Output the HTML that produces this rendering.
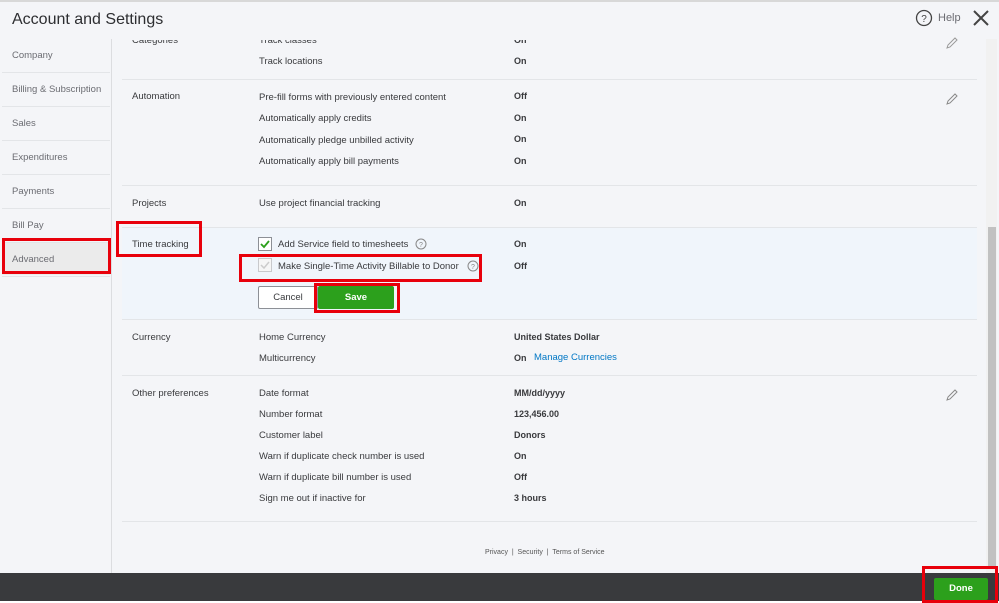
<!DOCTYPE html><html><head><style>
*{margin:0;padding:0;box-sizing:border-box}
body{width:999px;height:603px;overflow:hidden;background:#f4f5f8;font-family:"Liberation Sans",sans-serif;position:relative;color:#393a3d}
.a{position:absolute;white-space:nowrap}
.t{font-size:9.5px;color:#393a3d;margin-top:1px}
.v{font-size:9px;color:#393a3d;font-weight:bold}
.s{font-size:9.5px;color:#6b6c72;margin-top:1px}
.hl{position:absolute;height:1px;background:#e3e5e8}
.rb{position:absolute;border:3px solid #e8000b}
</style></head><body>
<div class="a" style="left:0;top:0;width:999px;height:2px;background:#d8d8d8"></div>
<div class="a" style="left:12px;top:11px;font-size:16px;color:#2d2e31">Account and Settings</div>
<svg class="a" style="left:915px;top:9px" width="18" height="18"><circle cx="9" cy="9" r="7.5" fill="none" stroke="#444" stroke-width="1.3"/><text x="9" y="13" font-size="10" text-anchor="middle" fill="#444" font-family="Liberation Sans">?</text></svg>
<div class="a" style="left:938px;top:12px;font-size:11px;color:#6b6c72">Help</div>
<svg class="a" style="left:972px;top:9px" width="18" height="18"><path d="M2 2L16 16M16 2L2 16" stroke="#444" stroke-width="2"/></svg>
<div class="a" style="left:111px;top:39px;width:1px;height:534px;background:#dcdde0"></div>
<div class="a" style="left:2px;top:242px;width:108px;height:33px;background:#ebebeb"></div>
<div class="hl" style="left:2px;top:72px;width:108px"></div>
<div class="hl" style="left:2px;top:106px;width:108px"></div>
<div class="hl" style="left:2px;top:140px;width:108px"></div>
<div class="hl" style="left:2px;top:174px;width:108px"></div>
<div class="hl" style="left:2px;top:208px;width:108px"></div>
<div class="hl" style="left:2px;top:242px;width:108px"></div>
<div class="hl" style="left:2px;top:276px;width:108px"></div>
<div class="a s" style="left:12px;top:49px">Company</div>
<div class="a s" style="left:12px;top:83px">Billing &amp; Subscription</div>
<div class="a s" style="left:12px;top:117px">Sales</div>
<div class="a s" style="left:12px;top:151px">Expenditures</div>
<div class="a s" style="left:12px;top:185px">Payments</div>
<div class="a s" style="left:12px;top:219px">Bill Pay</div>
<div class="a s" style="left:12px;top:253px">Advanced</div>
<div class="a" style="left:122px;top:227px;width:855px;height:92px;background:#f0f5fb"></div>
<div class="hl" style="left:122px;top:79px;width:855px"></div>
<div class="hl" style="left:122px;top:185px;width:855px"></div>
<div class="hl" style="left:122px;top:227px;width:855px"></div>
<div class="hl" style="left:122px;top:319px;width:855px"></div>
<div class="hl" style="left:122px;top:375px;width:855px"></div>
<div class="hl" style="left:122px;top:521px;width:855px"></div>
<div class="a t" style="left:132px;top:34px;clip-path:inset(5px 0 0 0)">Categories</div>
<div class="a t" style="left:259px;top:34px;clip-path:inset(5px 0 0 0)">Track classes</div>
<div class="a v" style="left:514px;top:35px;clip-path:inset(5px 0 0 0)">On</div>
<div class="a t" style="left:259px;top:55px">Track locations</div><div class="a v" style="left:514px;top:56px">On</div>
<div class="a t" style="left:132px;top:90px">Automation</div>
<div class="a t" style="left:259px;top:91px">Pre-fill forms with previously entered content</div><div class="a v" style="left:514px;top:91px">Off</div>
<div class="a t" style="left:259px;top:112px">Automatically apply credits</div><div class="a v" style="left:514px;top:113px">On</div>
<div class="a t" style="left:259px;top:134px">Automatically pledge unbilled activity</div><div class="a v" style="left:514px;top:134px">On</div>
<div class="a t" style="left:259px;top:155px">Automatically apply bill payments</div><div class="a v" style="left:514px;top:156px">On</div>
<div class="a t" style="left:132px;top:197px">Projects</div>
<div class="a t" style="left:259px;top:197px">Use project financial tracking</div><div class="a v" style="left:514px;top:198px">On</div>
<div class="a t" style="left:132px;top:238px">Time tracking</div>
<svg class="a" style="left:258px;top:237px" width="14" height="14"><rect x=".5" y=".5" width="13" height="13" fill="#fff" stroke="#8d9096"/><path d="M3 7l3 3 5-6" stroke="#2ca01c" stroke-width="1.8" fill="none"/></svg>
<div class="a t" style="left:278px;top:238px">Add Service field to timesheets</div>
<svg class="a" style="left:415px;top:238px" width="12" height="12"><circle cx="6" cy="6" r="5" fill="none" stroke="#888"/><text x="6" y="9" font-size="7" text-anchor="middle" fill="#888" font-family="Liberation Sans">?</text></svg>
<div class="a v" style="left:514px;top:239px">On</div>
<svg class="a" style="left:258px;top:258px" width="14" height="14"><rect x=".5" y=".5" width="13" height="13" fill="#f6f6f6" stroke="#c8c9cc"/><path d="M3 7l3 3 5-6" stroke="#ccc" stroke-width="1.5" fill="none"/></svg>
<div class="a t" style="left:278px;top:260px">Make Single-Time Activity Billable to Donor</div>
<svg class="a" style="left:467px;top:260px" width="12" height="12"><circle cx="6" cy="6" r="5" fill="none" stroke="#888"/><text x="6" y="9" font-size="7" text-anchor="middle" fill="#888" font-family="Liberation Sans">?</text></svg>
<div class="a v" style="left:514px;top:261px">Off</div>
<div class="a" style="left:258px;top:286px;width:60px;height:23px;background:#fff;border:1px solid #8d9096;border-radius:2px;font-size:9.5px;text-align:center;line-height:21px;color:#393a3d">Cancel</div>
<div class="a" style="left:318px;top:286px;width:76px;height:23px;background:#2ca01c;border-radius:2px;font-size:9.5px;font-weight:bold;color:#fff;text-align:center;line-height:23px">Save</div>
<div class="a t" style="left:132px;top:331px">Currency</div>
<div class="a t" style="left:259px;top:331px">Home Currency</div><div class="a v" style="left:514px;top:332px">United States Dollar</div>
<div class="a t" style="left:259px;top:352px">Multicurrency</div><div class="a v" style="left:514px;top:353px">On</div>
<div class="a" style="left:534px;top:352px;font-size:9.5px;color:#0077c5">Manage Currencies</div>
<div class="a t" style="left:132px;top:387px">Other preferences</div>
<div class="a t" style="left:259px;top:387px">Date format</div><div class="a v" style="left:514px;top:388px">MM/dd/yyyy</div>
<div class="a t" style="left:259px;top:408px">Number format</div><div class="a v" style="left:514px;top:409px">123,456.00</div>
<div class="a t" style="left:259px;top:429px">Customer label</div><div class="a v" style="left:514px;top:430px">Donors</div>
<div class="a t" style="left:259px;top:450px">Warn if duplicate check number is used</div><div class="a v" style="left:514px;top:451px">On</div>
<div class="a t" style="left:259px;top:471px">Warn if duplicate bill number is used</div><div class="a v" style="left:514px;top:472px">Off</div>
<div class="a t" style="left:259px;top:492px">Sign me out if inactive for</div><div class="a v" style="left:514px;top:493px">3 hours</div>
<svg class="a" style="left:945px;top:36px" width="14" height="14"><path d="M2 12l1-3 7-7 2 2-7 7z" fill="none" stroke="#999"/></svg>
<svg class="a" style="left:945px;top:92px" width="14" height="14"><path d="M2 12l1-3 7-7 2 2-7 7z" fill="none" stroke="#888"/></svg>
<svg class="a" style="left:945px;top:388px" width="14" height="14"><path d="M2 12l1-3 7-7 2 2-7 7z" fill="none" stroke="#888"/></svg>
<div class="a" style="left:485px;top:549px;font-size:7px;color:#555">Privacy &nbsp;| &nbsp;Security &nbsp;| &nbsp;Terms of Service</div>
<div class="a" style="left:986px;top:39px;width:11px;height:534px;background:#f1f1f1"></div>
<div class="a" style="left:988px;top:227px;width:8px;height:340px;background:#c1c1c1"></div>
<div class="a" style="left:0;top:573px;width:999px;height:28px;background:#393a3d"></div>
<div class="a" style="left:0;top:601px;width:999px;height:2px;background:#fff"></div>
<div class="a" style="left:934px;top:578px;width:54px;height:22px;background:#2ca01c;border-radius:2px;color:#fff;font-size:9.5px;font-weight:bold;text-align:center;line-height:22px">Done</div>
<div class="rb" style="left:2px;top:238px;width:109px;height:36px"></div>
<div class="rb" style="left:116px;top:221px;width:86px;height:36px"></div>
<div class="rb" style="left:239px;top:254px;width:243px;height:28px"></div>
<div class="rb" style="left:314px;top:283px;width:86px;height:30px"></div>
<div class="rb" style="left:922px;top:566px;width:76px;height:37px"></div>
</body></html>
